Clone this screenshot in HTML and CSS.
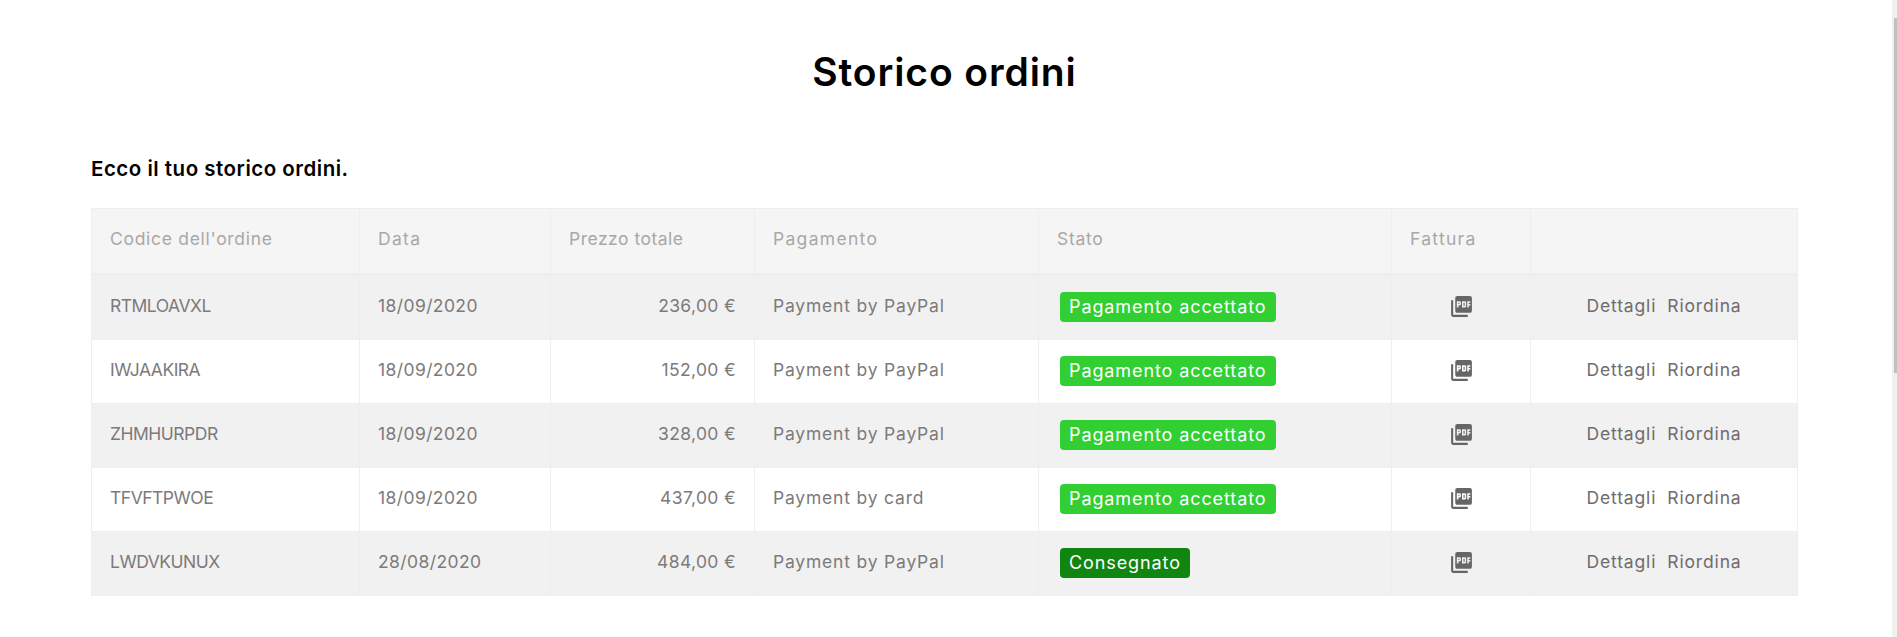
FILE: index.html
```html
<!DOCTYPE html>
<html lang="it">
<head>
<meta charset="utf-8">
<title>Storico ordini</title>
<link rel="stylesheet" href="styles.css">
</head>
<body>
<main class="page">
  <h1 class="title">Storico ordini</h1>
  <h2 class="subtitle">Ecco il tuo storico ordini.</h2>
  <table class="orders">
    <colgroup>
      <col class="c1"><col class="c2"><col class="c3"><col class="c4"><col class="c5"><col class="c6"><col class="c7">
    </colgroup>
    <thead>
      <tr><th>Codice dell'ordine</th><th class="wide">Data</th><th class="tight">Prezzo totale</th><th class="wide">Pagamento</th><th>Stato</th><th class="wide">Fattura</th><th></th></tr>
    </thead>
    <tbody>
      <tr><td class="code">RTMLOAVXL</td><td class="date">18/09/2020</td><td class="price">236,00 €</td><td class="pay">Payment by PayPal</td><td class="stato"><span class="badge ok">Pagamento accettato</span></td><td class="pdf"><svg class="icon" viewBox="0 0 24 24"><use href="#pdf"/></svg></td><td class="actions"><a>Dettagli</a><a>Riordina</a></td></tr>
      <tr><td class="code">IWJAAKIRA</td><td class="date">18/09/2020</td><td class="price">152,00 €</td><td class="pay">Payment by PayPal</td><td class="stato"><span class="badge ok">Pagamento accettato</span></td><td class="pdf"><svg class="icon" viewBox="0 0 24 24"><use href="#pdf"/></svg></td><td class="actions"><a>Dettagli</a><a>Riordina</a></td></tr>
      <tr><td class="code">ZHMHURPDR</td><td class="date">18/09/2020</td><td class="price">328,00 €</td><td class="pay">Payment by PayPal</td><td class="stato"><span class="badge ok">Pagamento accettato</span></td><td class="pdf"><svg class="icon" viewBox="0 0 24 24"><use href="#pdf"/></svg></td><td class="actions"><a>Dettagli</a><a>Riordina</a></td></tr>
      <tr><td class="code">TFVFTPWOE</td><td class="date">18/09/2020</td><td class="price">437,00 €</td><td class="pay">Payment by card</td><td class="stato"><span class="badge ok">Pagamento accettato</span></td><td class="pdf"><svg class="icon" viewBox="0 0 24 24"><use href="#pdf"/></svg></td><td class="actions"><a>Dettagli</a><a>Riordina</a></td></tr>
      <tr><td class="code">LWDVKUNUX</td><td class="date">28/08/2020</td><td class="price">484,00 €</td><td class="pay">Payment by PayPal</td><td class="stato"><span class="badge done">Consegnato</span></td><td class="pdf"><svg class="icon" viewBox="0 0 24 24"><use href="#pdf"/></svg></td><td class="actions"><a>Dettagli</a><a>Riordina</a></td></tr>
    </tbody>
  </table>
</main>
<div class="scrollbar"><div class="thumb"></div></div>
<svg class="defs" aria-hidden="true"><defs><path id="pdf" d="M20 2H8c-1.1 0-2 .9-2 2v12c0 1.1.9 2 2 2h12c1.1 0 2-.9 2-2V4c0-1.1-.9-2-2-2zm-8.5 7.5c0 .83-.67 1.5-1.5 1.5H9v2H7.5V7H10c.83 0 1.5.67 1.5 1.5v1zm5 2c0 .83-.67 1.5-1.5 1.5h-2.5V7H15c.83 0 1.5.67 1.5 1.5v3zm4-3H19v1h1.5V11H19v2h-1.5V7h3v1.5zM9 9.5h1v-1H9v1zM4 6H2v14c0 1.1.9 2 2 2h14v-2H4V6zm10 5.5h1v-3h-1v3z"/></defs></svg>
</body>
</html>
```
FILE: styles.css
```css
html, body {
  margin: 0;
  height: 637px;
  overflow: hidden;
  background: #fff;
  font-family: Inter, "Noto Sans", sans-serif;
}
.page {
  padding: 48px 99px 0 91px;
}
.title {
  margin: 0;
  text-align: center;
  font-size: 39px;
  letter-spacing: 0.9px;
  line-height: 48px;
  font-weight: 600;
  color: #000;
}
.subtitle {
  margin: 61px 0 0;
  font-size: 20.5px;
  letter-spacing: 0.5px;
  line-height: 24px;
  font-weight: 600;
  color: #000;
}
.orders {
  margin-top: 27px;
  width: 1706px;
  table-layout: fixed;
  border-collapse: collapse;
  font-size: 17.5px;
  color: #7d7a7a;
}
.c1 { width: 268px; }
.c2 { width: 191px; }
.c3 { width: 204px; }
.c4 { width: 284px; }
.c5 { width: 353px; }
.c6 { width: 139px; }
.c7 { width: 267px; }
th, td {
  border: 1px solid #eee;
  padding: 0 18px 5px;
  text-align: left;
  font-weight: 400;
  white-space: nowrap;
}
th {
  height: 59px;
  background: #f5f5f5;
  color: #aaa7a7;
  letter-spacing: 0.7px;
  border-bottom: 3px solid #eee;
}
th.wide { letter-spacing: 1.3px; }
th.tight { letter-spacing: 0.5px; }
td { height: 58px; }
tbody tr:nth-child(odd) td { background: #f1f1f1; }
.code { letter-spacing: -0.5px; }
.date { letter-spacing: 0.4px; }
.price { text-align: right; letter-spacing: 0.35px; }
.pay { letter-spacing: 0.8px; }
td.stato { padding-left: 21px; padding-bottom: 2px; }
.badge {
  display: inline-block;
  padding: 0 9px;
  height: 30px;
  line-height: 29px;
  border-radius: 4px;
  color: #fff;
  font-size: 18px;
  letter-spacing: 0.9px;
  vertical-align: middle;
}
.ok { background: #32cf32; }
.done { background: #108510; }
td.pdf { padding-bottom: 3px; }
.icon {
  display: block;
  width: 25px;
  height: 25px;
  margin: 0 auto;
  fill: #666;
}
.actions { text-align: center; color: #6f6c6c; letter-spacing: 0.85px; }
.actions a + a { margin-left: 11px; }
.scrollbar {
  position: fixed;
  top: 0;
  right: 0;
  width: 5px;
  height: 637px;
  background: #f0f0f0;
}
.thumb {
  position: absolute;
  top: 18px;
  right: 0;
  width: 3px;
  height: 355px;
  background: #c1c1c1;
}
.defs { position: absolute; width: 0; height: 0; }
```
